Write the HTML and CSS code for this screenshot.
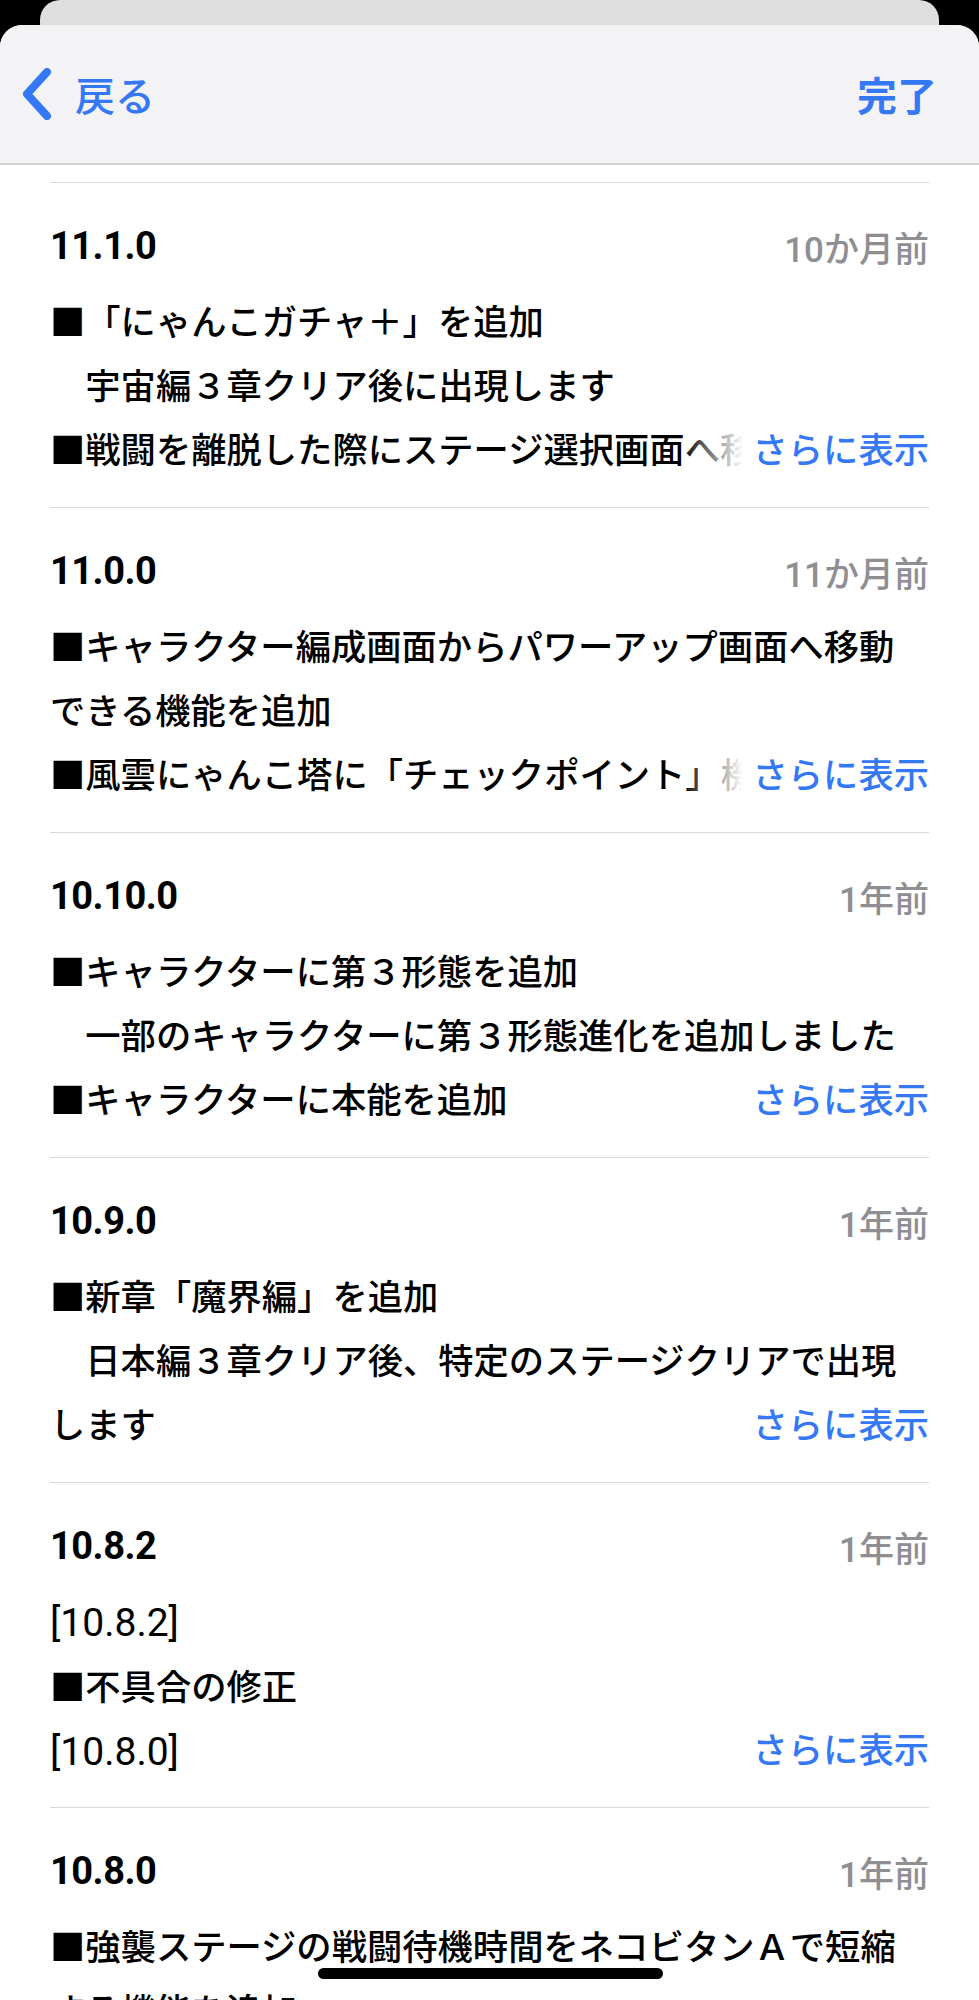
FILE: index.html
```html
<!DOCTYPE html>
<html lang="ja">
<head>
    <meta charset="UTF-8">
    <meta name="viewport" content="width=device-width, initial-scale=1.0">
    <title>バージョン履歴</title>
    <link rel="stylesheet" href="styles.css">
</head>
<body>
    <div class="back-card"></div>
    <div class="sheet">
        <div class="navbar">
            <a class="nav-back" href="#">
                <svg class="chevron" width="34" height="52" viewBox="0 0 34 52">
                    <path d="M27 4 L7 26 L27 48" fill="none" stroke="currentColor" stroke-width="8" stroke-linecap="round" stroke-linejoin="round"/>
                </svg>
                <span>戻る</span>
            </a>
            <a class="nav-done" href="#">完了</a>
        </div>

        <div class="history">
            <div class="release">
                <div class="release-head">
                    <span class="version">11.1.0</span>
                    <span class="date">10か月前</span>
                </div>
                <div class="notes">■「にゃんこガチャ＋」を追加
　宇宙編３章クリア後に出現します
■戦闘を離脱した際にステージ選択画面へ移動するように変更<a class="more" href="#">さらに表示</a></div>
            </div>

            <div class="release">
                <div class="release-head">
                    <span class="version">11.0.0</span>
                    <span class="date">11か月前</span>
                </div>
                <div class="notes">■キャラクター編成画面からパワーアップ画面へ移動できる機能を追加
■風雲にゃんこ塔に「チェックポイント」機能を追加<a class="more" href="#">さらに表示</a></div>
            </div>

            <div class="release">
                <div class="release-head">
                    <span class="version">10.10.0</span>
                    <span class="date">1年前</span>
                </div>
                <div class="notes">■キャラクターに第３形態を追加
　一部のキャラクターに第３形態進化を追加しました
■キャラクターに本能を追加<a class="more" href="#">さらに表示</a></div>
            </div>

            <div class="release">
                <div class="release-head">
                    <span class="version">10.9.0</span>
                    <span class="date">1年前</span>
                </div>
                <div class="notes">■新章「魔界編」を追加
　日本編３章クリア後、特定のステージクリアで出現します<a class="more" href="#">さらに表示</a></div>
            </div>

            <div class="release">
                <div class="release-head">
                    <span class="version">10.8.2</span>
                    <span class="date">1年前</span>
                </div>
                <div class="notes"><span class="tag">[10.8.2]</span>
■不具合の修正
<span class="tag">[10.8.0]</span><a class="more" href="#">さらに表示</a></div>
            </div>

            <div class="release">
                <div class="release-head">
                    <span class="version">10.8.0</span>
                    <span class="date">1年前</span>
                </div>
                <div class="notes">■強襲ステージの戦闘待機時間をネコビタンＡで短縮する機能を追加
■その他の不具合の修正<a class="more" href="#">さらに表示</a></div>
            </div>
        </div>
    </div>
    <div class="home-indicator"></div>
</body>
</html>
```

FILE: styles.css
```css
html, body {
    margin: 0;
    padding: 0;
}
body {
    background-color: #000;
    height: 2000px;
    overflow: hidden;
    font-family: Roboto, "Noto Sans CJK JP", sans-serif;
    color: #000;
}
a {
    text-decoration: none;
    color: #3478f6;
}
.back-card {
    height: 25px;
    margin: 0 40px;
    background-color: #dedede;
    border-top-left-radius: 20px;
    border-top-right-radius: 20px;
}
.sheet {
    background-color: #fff;
    border-top-left-radius: 22px;
    border-top-right-radius: 22px;
    overflow: hidden;
    height: 1975px;
}
.navbar {
    height: 140px;
    background-color: #f3f3f5;
    border-bottom: 2px solid #d2d2d5;
    box-sizing: border-box;
    display: flex;
    align-items: center;
    justify-content: space-between;
    padding: 0 42px 0 20px;
}
.nav-back {
    display: flex;
    align-items: center;
    gap: 21px;
    font-family: "Noto Sans CJK JP", sans-serif;
    font-size: 40px;
    font-weight: 500;
}
.chevron {
    display: block;
}
.nav-done {
    font-family: "Noto Sans CJK JP", sans-serif;
    font-size: 40px;
    font-weight: 700;
}
.history {
    padding-top: 17px;
    margin: 0 50px;
}
.release {
    border-top: 1px solid #d9d9dc;
    padding: 41px 0 24px;
}
.release-head {
    display: flex;
    justify-content: space-between;
    align-items: center;
    height: 44px;
    margin-bottom: 23px;
}
.version {
    font-size: 38px;
    font-weight: 700;
    letter-spacing: -0.5px;
}
.date {
    font-size: 35px;
    font-weight: 500;
    color: #8e8e93;
}
.notes {
    position: relative;
    font-family: Roboto, "Noto Sans CJK JP", sans-serif;
    font-size: 35.3px;
    font-weight: 500;
    line-height: 64px;
    max-height: 192px;
    overflow: hidden;
    white-space: pre-line;
}
.tag {
    font-size: 39px;
    font-weight: 400;
}
.more {
    position: absolute;
    right: 0;
    bottom: 0;
    padding-left: 72px;
    background: linear-gradient(to right, rgba(255, 255, 255, 0), #fff 62px);
    line-height: 64px;
}
.home-indicator {
    position: fixed;
    left: 50%;
    bottom: 21px;
    width: 345px;
    height: 11px;
    margin-left: -172px;
    border-radius: 6px;
    background-color: #000;
}
```
